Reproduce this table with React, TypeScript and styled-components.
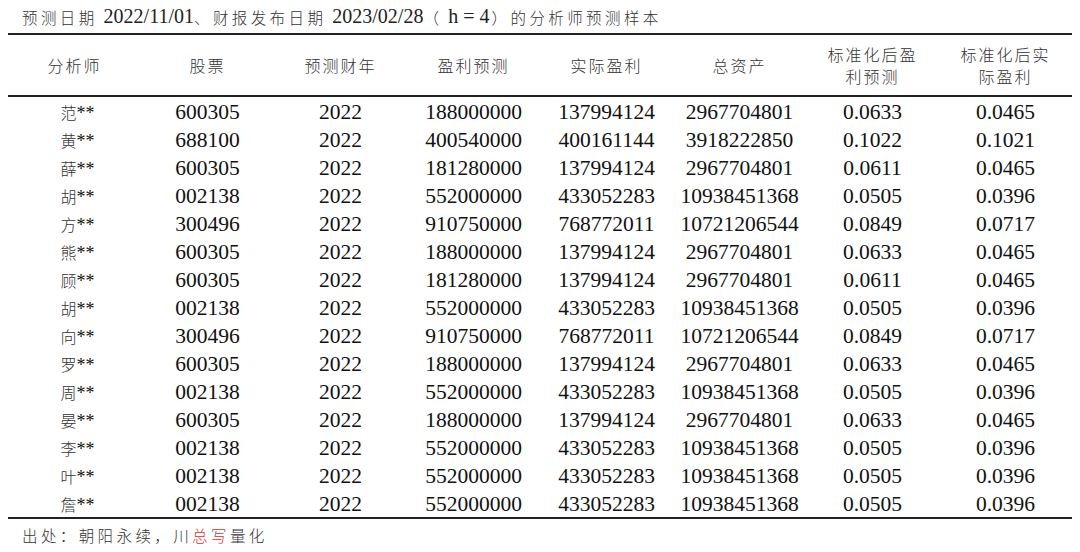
import React from "react";
import styled, { createGlobalStyle } from "styled-components";

const GlobalStyle = createGlobalStyle`
  html, body {
    margin: 0;
    padding: 0;
    background: #ffffff;
  }
  body {
    width: 1080px;
    height: 552px;
    overflow: hidden;
    font-family: "Liberation Serif", "Noto Sans CJK SC", serif;
    color: #1a1a1a;
  }
`;

const headers: string[][] = [
  ["分析师"],
  ["股票"],
  ["预测财年"],
  ["盈利预测"],
  ["实际盈利"],
  ["总资产"],
  ["标准化后盈", "利预测"],
  ["标准化后实", "际盈利"],
];

const rows: string[][] = [
  ["范", "600305", "2022", "188000000", "137994124", "2967704801", "0.0633", "0.0465"],
  ["黄", "688100", "2022", "400540000", "400161144", "3918222850", "0.1022", "0.1021"],
  ["薛", "600305", "2022", "181280000", "137994124", "2967704801", "0.0611", "0.0465"],
  ["胡", "002138", "2022", "552000000", "433052283", "10938451368", "0.0505", "0.0396"],
  ["方", "300496", "2022", "910750000", "768772011", "10721206544", "0.0849", "0.0717"],
  ["熊", "600305", "2022", "188000000", "137994124", "2967704801", "0.0633", "0.0465"],
  ["顾", "600305", "2022", "181280000", "137994124", "2967704801", "0.0611", "0.0465"],
  ["胡", "002138", "2022", "552000000", "433052283", "10938451368", "0.0505", "0.0396"],
  ["向", "300496", "2022", "910750000", "768772011", "10721206544", "0.0849", "0.0717"],
  ["罗", "600305", "2022", "188000000", "137994124", "2967704801", "0.0633", "0.0465"],
  ["周", "002138", "2022", "552000000", "433052283", "10938451368", "0.0505", "0.0396"],
  ["晏", "600305", "2022", "188000000", "137994124", "2967704801", "0.0633", "0.0465"],
  ["李", "002138", "2022", "552000000", "433052283", "10938451368", "0.0505", "0.0396"],
  ["叶", "002138", "2022", "552000000", "433052283", "10938451368", "0.0505", "0.0396"],
  ["詹", "002138", "2022", "552000000", "433052283", "10938451368", "0.0505", "0.0396"],
];

const Page = styled.div`
  width: 1080px;
  height: 552px;
  display: flex;
  flex-direction: column;
`;

const Caption = styled.div`
  flex-shrink: 0;
  height: 33px;
  padding-left: 22px;
  display: flex;
  align-items: center;
  font-size: 20px;
  color: #222;
  white-space: nowrap;
`;

const Cjk = styled.span<{ $red?: boolean }>`
  font-family: "Noto Sans CJK SC", sans-serif;
  font-weight: 300;
  font-size: 15.5px;
  letter-spacing: 3.4px;
  color: ${(p) => (p.$red ? "#d0312d" : "#333")};
`;

const Num = styled.span<{ $gap?: number }>`
  font-family: "Liberation Serif", serif;
  margin: 0 ${(p) => p.$gap ?? 0}px 0 6px;
`;

const Table = styled.table`
  flex-shrink: 0;
  margin: 0 8px;
  width: 1064px;
  border-collapse: collapse;
  table-layout: fixed;
  border-top: 2px solid #222;
  border-bottom: 2px solid #222;
`;

const HeadRow = styled.tr`
  height: 62px;
  border-bottom: 2px solid #222;
`;

const HeadCell = styled.th`
  font-family: "Noto Sans CJK SC", sans-serif;
  font-weight: 300;
  font-size: 16px;
  line-height: 22px;
  letter-spacing: 2px;
  color: #333;
  text-align: center;
  vertical-align: middle;
  padding: 0;
`;

const BodyRow = styled.tr`
  height: 28px;
`;

const Cell = styled.td`
  height: 25px;
  padding: 3px 0 0;
  font-size: 21.5px;
  line-height: 1;
  text-align: center;
  vertical-align: middle;
  color: #111;
  white-space: nowrap;
  &:first-child {
    padding-left: 6px;
  }
`;

const Name = styled.span`
  font-family: "Noto Sans CJK SC", sans-serif;
  font-weight: 300;
  font-size: 16px;
  line-height: 1;
  color: #333;
`;

const Stars = styled.span`
  font-family: "Liberation Serif", serif;
  font-size: 18px;
`;

const Source = styled.div`
  flex-shrink: 0;
  height: 31px;
  padding-left: 22px;
  display: flex;
  align-items: center;
`;

export default function App() {
  return (
    <Page>
      <GlobalStyle />
      <Caption>
        <Cjk>预测日期</Cjk>
        <Num>2022/11/01</Num>
        <Cjk>、财报发布日期</Cjk>
        <Num>2023/02/28</Num>
        <Cjk>（</Cjk>
        <Num $gap={2}>h&nbsp;=&nbsp;4</Num>
        <Cjk>）的分析师预测样本</Cjk>
      </Caption>
      <Table>
        <colgroup>
          {headers.map((_, i) => (
            <col key={i} style={{ width: `${100 / headers.length}%` }} />
          ))}
        </colgroup>
        <thead>
          <HeadRow>
            {headers.map((h, i) => (
              <HeadCell key={i}>
                {h.map((line, j) => (
                  <div key={j}>{line}</div>
                ))}
              </HeadCell>
            ))}
          </HeadRow>
        </thead>
        <tbody>
          {rows.map((r, i) => (
            <BodyRow key={i}>
              <Cell>
                <Name>{r[0]}</Name>
                <Stars>**</Stars>
              </Cell>
              {r.slice(1).map((v, j) => (
                <Cell key={j}>{v}</Cell>
              ))}
            </BodyRow>
          ))}
        </tbody>
      </Table>
      <Source>
        <Cjk>出处：朝阳永续，川</Cjk>
        <Cjk $red>总写</Cjk>
        <Cjk>量化</Cjk>
      </Source>
    </Page>
  );
}
